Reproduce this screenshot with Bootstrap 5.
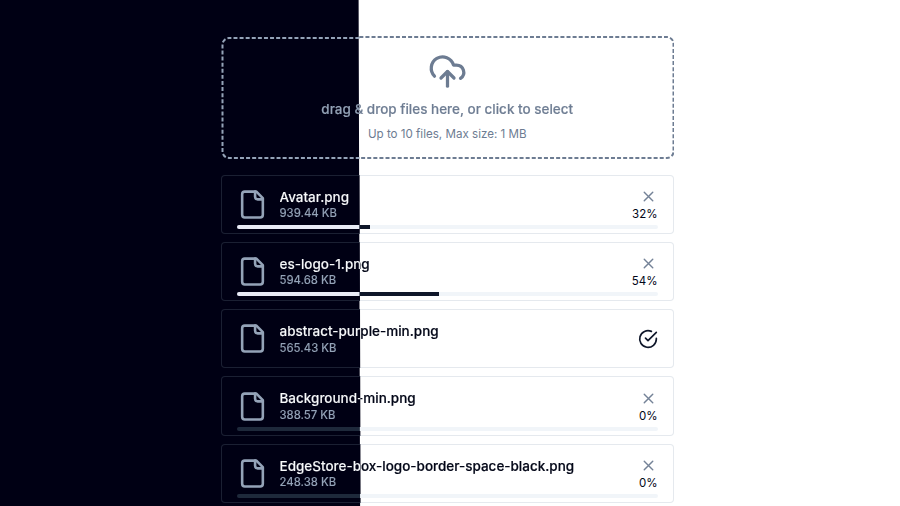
<!DOCTYPE html>
<html lang="en">
<head>
<meta charset="utf-8">
<meta name="viewport" content="width=device-width, initial-scale=1">
<title>File upload</title>
<link rel="stylesheet" href="https://cdn.jsdelivr.net/npm/bootstrap@5.3.0/dist/css/bootstrap.min.css">
<style>
  /* Dark theme left of the split line, light theme right of it. Every two-tone
     surface paints the same viewport-fixed gradient, so the halves line up. */
  body, .tone-title, .tone-muted, .upload-item, .upload-track, .upload-fill {
    --split: linear-gradient(89.83deg, var(--d) 359.6px, var(--l) 360.6px);
  }
  body {
    --d: #000014; --l: #fff;
    height: 506px; overflow: hidden;
    font-family: Inter, "Liberation Sans", sans-serif;
    background: var(--split) fixed;
  }
  .uploader { width: 453.5px; margin-left: 220.5px; padding-top: 36px; }
  .tone-title, .tone-muted {
    background: var(--split) fixed;
    -webkit-background-clip: text; background-clip: text;
    color: transparent;
    -webkit-text-stroke: .2px transparent;
  }
  .tone-title { --d: #f8fafc; --l: #020617; }
  .tone-muted { --d: #94a3b8; --l: #6d7c92; }
  .dropzone { height: 123px; margin-bottom: 15.5px; color: #6d7c92; }
  .dropzone .outline { inset: 0; width: 100%; height: 100%; }
  .dropzone .prompt { font-size: 13.5px; line-height: 20px; font-weight: 500; margin-top: 8px; }
  .dropzone .hint { font-size: 11.6px; line-height: 16px; margin-top: 6.5px; }
  .upload-list { gap: 8px; }
  .upload-item {
    --d: #1b2033; --l: #e5e9ee;
    height: 59.3px; padding: 0 15.5px; border: 1px solid transparent; border-radius: 4px;
    background: linear-gradient(89.83deg, #000014 359.6px, #fff 360.6px) fixed padding-box, var(--split) fixed border-box;
    background-clip: padding-box, border-box;
  }
  .file-icon { width: 31px; height: 31px; color: #94a3b8; margin-top: 13.2px; }
  .file-name { font-size: 13.49px; line-height: 18px; font-weight: 500; }
  .file-size { font-size: 11.3px; line-height: 15px; font-weight: 500; margin-top: .6px; -webkit-text-stroke-width: .1px; }
  .percent { font-size: 11.5px; line-height: 14px; color: #020617; }
  .upload-track { --d: #1e293b; --l: #f1f5f9; height: 4px; border-radius: 4px; background: var(--split) fixed; }
  .upload-fill { --d: #e9ebf6; --l: #0f172a; background: var(--split) fixed; }
  .stroke-icon { fill: none; stroke: currentColor; stroke-width: 2; stroke-linecap: round; stroke-linejoin: round; }
  .item-main { height: 49.6px; }
  .names { margin-left: 11.5px; padding-top: 12.1px; }
  .actions { padding-top: 12.7px; }
  .close-icon { width: 17px; height: 17px; margin: 0 .7px 2px 0; color: #748297; }
  .done-icon { color: #0f172a; }
</style>
</head>
<body>
<svg class="d-none" aria-hidden="true">
  <symbol id="i-file" viewBox="0 0 24 24"><path d="M15 2H6a2 2 0 0 0-2 2v16a2 2 0 0 0 2 2h12a2 2 0 0 0 2-2V7Z"/><path d="M14 2v4a2 2 0 0 0 2 2h4"/></symbol>
  <symbol id="i-x" viewBox="0 0 24 24"><path d="M18 6 6 18M6 6l12 12"/></symbol>
</svg>
<main class="uploader">
  <section class="dropzone position-relative d-flex flex-column align-items-center">
    <svg class="outline position-absolute" viewBox="0 0 454 123" fill="none" stroke-width="2" stroke-dasharray="4 2.1">
      <path stroke="#94a3b8" d="M138.5 2H8a6.5 6.5 0 0 0-6.5 6.5V115.5a6.5 6.5 0 0 0 6.5 6.5H138.7"/>
      <path stroke="#6d7c92" d="M138.5 1H446.5a6.5 6.5 0 0 1 6.5 6.5V115.5a6.5 6.5 0 0 1-6.5 6.5H138.7"/>
    </svg>
    <svg class="stroke-icon mt-3" width="39" height="39" viewBox="0 0 24 24"><path d="M4 14.899A7 7 0 1 1 15.71 8h1.79a4.5 4.5 0 0 1 2.5 8.242"/><path d="M12 12v9"/><path d="m16 16-4-4-4 4"/></svg>
    <div class="prompt tone-muted">drag &amp; drop files here, or click to select</div>
    <div class="hint">Up to 10 files, Max size: 1 MB</div>
  </section>
  <section class="upload-list d-flex flex-column">
    <article class="upload-item">
      <div class="item-main d-flex">
        <svg class="file-icon stroke-icon flex-shrink-0"><use href="#i-file"/></svg>
        <div class="names flex-grow-1"><div class="file-name tone-title">Avatar.png</div><div class="file-size tone-muted">939.44 KB</div></div>
        <div class="actions d-flex flex-column align-items-end"><svg class="stroke-icon close-icon"><use href="#i-x"/></svg><div class="percent">32%</div></div>
      </div>
      <div class="upload-track overflow-hidden"><div class="upload-fill h-100" style="width:31.7%"></div></div>
    </article>
    <article class="upload-item">
      <div class="item-main d-flex">
        <svg class="file-icon stroke-icon flex-shrink-0"><use href="#i-file"/></svg>
        <div class="names flex-grow-1"><div class="file-name tone-title">es-logo-1.png</div><div class="file-size tone-muted">594.68 KB</div></div>
        <div class="actions d-flex flex-column align-items-end"><svg class="stroke-icon close-icon"><use href="#i-x"/></svg><div class="percent">54%</div></div>
      </div>
      <div class="upload-track overflow-hidden"><div class="upload-fill h-100" style="width:48%"></div></div>
    </article>
    <article class="upload-item">
      <div class="item-main d-flex">
        <svg class="file-icon stroke-icon flex-shrink-0"><use href="#i-file"/></svg>
        <div class="names flex-grow-1"><div class="file-name tone-title">abstract-purple-min.png</div><div class="file-size tone-muted">565.43 KB</div></div>
        <svg class="stroke-icon done-icon mt-3" width="20" height="26" viewBox="0 0 24 24"><path d="M22 11.08V12a10 10 0 1 1-5.93-9.14"/><path d="m9 11 3 3L22 4"/></svg>
      </div>
    </article>
    <article class="upload-item">
      <div class="item-main d-flex">
        <svg class="file-icon stroke-icon flex-shrink-0"><use href="#i-file"/></svg>
        <div class="names flex-grow-1"><div class="file-name tone-title">Background-min.png</div><div class="file-size tone-muted">388.57 KB</div></div>
        <div class="actions d-flex flex-column align-items-end"><svg class="stroke-icon close-icon"><use href="#i-x"/></svg><div class="percent">0%</div></div>
      </div>
      <div class="upload-track"></div>
    </article>
    <article class="upload-item">
      <div class="item-main d-flex">
        <svg class="file-icon stroke-icon flex-shrink-0"><use href="#i-file"/></svg>
        <div class="names flex-grow-1"><div class="file-name tone-title">EdgeStore-box-logo-border-space-black.png</div><div class="file-size tone-muted">248.38 KB</div></div>
        <div class="actions d-flex flex-column align-items-end"><svg class="stroke-icon close-icon"><use href="#i-x"/></svg><div class="percent">0%</div></div>
      </div>
      <div class="upload-track"></div>
    </article>
  </section>
</main>
<script src="https://cdn.jsdelivr.net/npm/bootstrap@5.3.0/dist/js/bootstrap.bundle.min.js"></script>
</body>
</html>
